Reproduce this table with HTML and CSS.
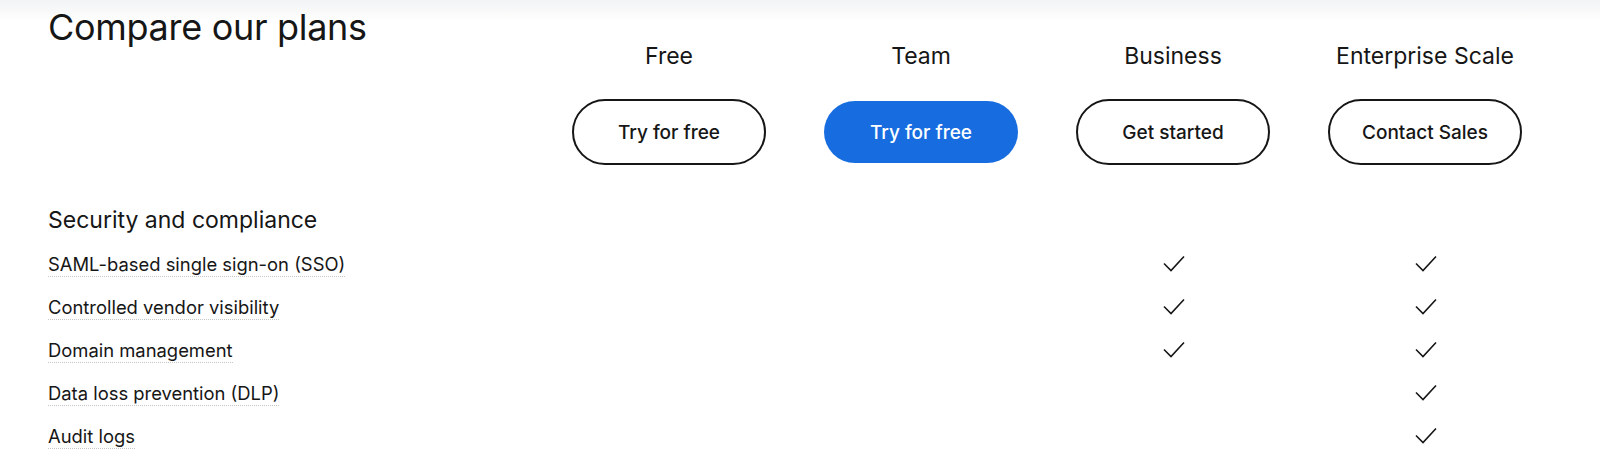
FILE: index.html
```html
<!DOCTYPE html>
<html lang="en">
  <head>
    <meta charset="UTF-8" />
    <meta name="viewport" content="width=device-width, initial-scale=1.0" />
    <title>Compare our plans</title>
    <link rel="stylesheet" href="styles.css">
  </head>
  <body>
    <div class="compare">
      <div class="plans-head">
        <h2 class="title">Compare our plans</h2>
        <div class="plan">
          <div class="plan-name">Free</div>
          <a class="btn btn-outline" href="#">Try for free</a>
        </div>
        <div class="plan">
          <div class="plan-name">Team</div>
          <a class="btn btn-primary" href="#">Try for free</a>
        </div>
        <div class="plan">
          <div class="plan-name">Business</div>
          <a class="btn btn-outline" href="#">Get started</a>
        </div>
        <div class="plan">
          <div class="plan-name">Enterprise Scale</div>
          <a class="btn btn-outline" href="#">Contact Sales</a>
        </div>
      </div>

      <div class="section">
        <h3 class="section-title">Security and compliance</h3>

        <div class="row">
          <div class="feature"><span>SAML-based single sign-on (SSO)</span></div>
          <div class="cell"></div>
          <div class="cell"></div>
          <div class="cell"><svg class="check" viewBox="0 0 24 24"><path d="M2 10.5L9 17.5L22 3.5"/></svg></div>
          <div class="cell"><svg class="check" viewBox="0 0 24 24"><path d="M2 10.5L9 17.5L22 3.5"/></svg></div>
        </div>
        <div class="row">
          <div class="feature"><span>Controlled vendor visibility</span></div>
          <div class="cell"></div>
          <div class="cell"></div>
          <div class="cell"><svg class="check" viewBox="0 0 24 24"><path d="M2 10.5L9 17.5L22 3.5"/></svg></div>
          <div class="cell"><svg class="check" viewBox="0 0 24 24"><path d="M2 10.5L9 17.5L22 3.5"/></svg></div>
        </div>
        <div class="row">
          <div class="feature"><span>Domain management</span></div>
          <div class="cell"></div>
          <div class="cell"></div>
          <div class="cell"><svg class="check" viewBox="0 0 24 24"><path d="M2 10.5L9 17.5L22 3.5"/></svg></div>
          <div class="cell"><svg class="check" viewBox="0 0 24 24"><path d="M2 10.5L9 17.5L22 3.5"/></svg></div>
        </div>
        <div class="row">
          <div class="feature"><span>Data loss prevention (DLP)</span></div>
          <div class="cell"></div>
          <div class="cell"></div>
          <div class="cell"></div>
          <div class="cell"><svg class="check" viewBox="0 0 24 24"><path d="M2 10.5L9 17.5L22 3.5"/></svg></div>
        </div>
        <div class="row">
          <div class="feature"><span>Audit logs</span></div>
          <div class="cell"></div>
          <div class="cell"></div>
          <div class="cell"></div>
          <div class="cell"><svg class="check" viewBox="0 0 24 24"><path d="M2 10.5L9 17.5L22 3.5"/></svg></div>
        </div>
      </div>
    </div>
  </body>
</html>
```

FILE: styles.css
```css
body {
  margin: 0;
  font-family: Inter, "Noto Sans", sans-serif;
  color: #161616;
  background: linear-gradient(to bottom, #f2f3f5 0, #ffffff 22px) no-repeat;
  background-color: #fff;
}
.compare {
  padding: 0 48px 0 47px;
}
.plans-head,
.row {
  display: grid;
  grid-template-columns: 496px repeat(4, 252px);
}
.plans-head {
  align-items: start;
}
.title {
  margin: 0;
  padding: 5px 0 0 1px;
  font-size: 36px;
  line-height: 44px;
  font-weight: 400;
  letter-spacing: -0.3px;
}
.plan {
  display: flex;
  flex-direction: column;
  align-items: center;
  padding-top: 42px;
}
.plan-name {
  font-size: 23px;
  line-height: 28px;
  margin-bottom: 29px;
}
.btn {
  display: flex;
  align-items: center;
  justify-content: center;
  box-sizing: border-box;
  width: 194px;
  height: 66px;
  border-radius: 33px;
  font-size: 19px;
  font-weight: 500;
  text-decoration: none;
}
.btn-outline {
  border: 2px solid #161616;
  color: #161616;
}
.btn-primary {
  height: 62px;
  margin-top: 2px;
  background-color: #176de0;
  color: #fff;
}
.section {
  margin-top: 41px;
  padding-left: 1px;
}
.section-title {
  margin: 0 0 9px;
  font-size: 23px;
  line-height: 28px;
  font-weight: 400;
}
.row {
  height: 43px;
  align-items: center;
}
.feature {
  font-size: 18.4px;
  line-height: 24px;
}
.feature span {
  display: inline-block;
  border-bottom: 1px dotted #c6c6c6;
}
.cell {
  display: flex;
  justify-content: center;
}
.check {
  width: 24px;
  height: 24px;
  fill: none;
  stroke: #161616;
  stroke-width: 1.6;
}
```
